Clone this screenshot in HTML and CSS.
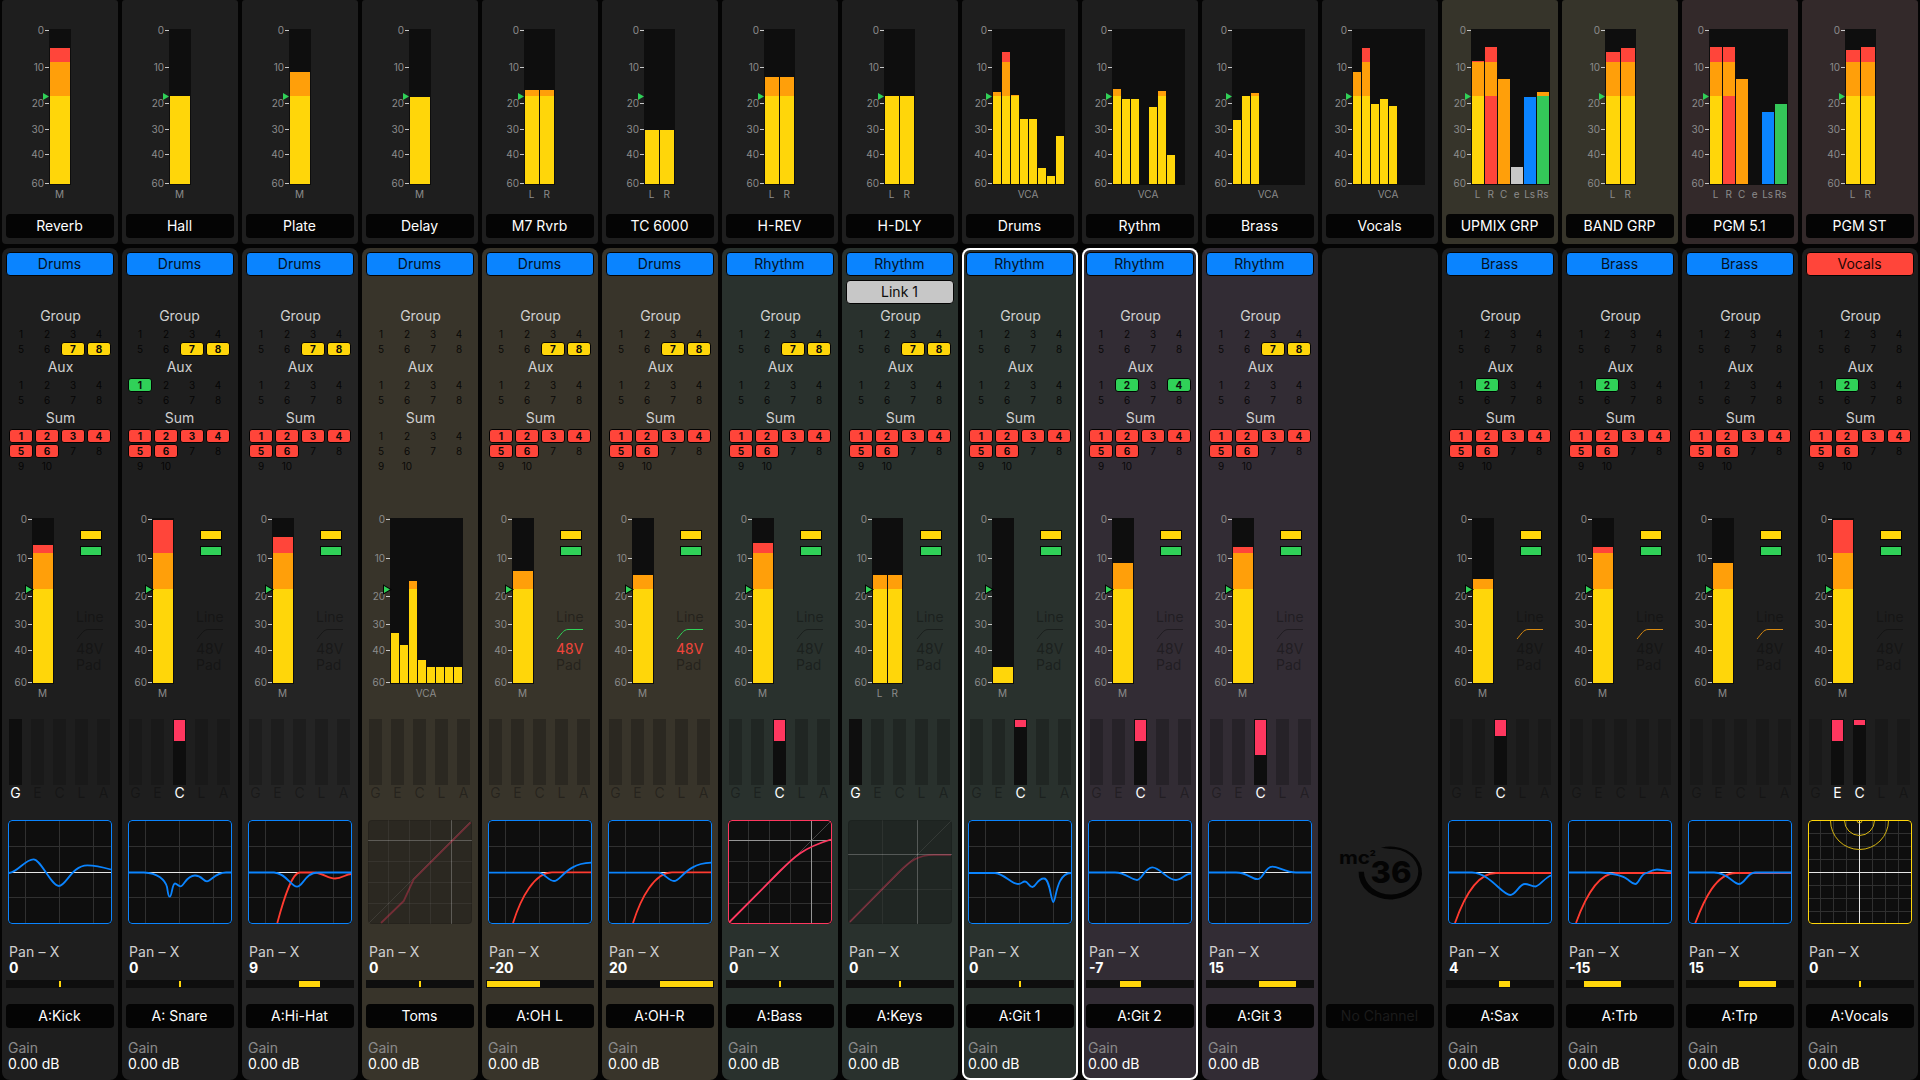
FILE: index.html
```html
<!DOCTYPE html>
<html lang="en">
<head>
<meta charset="utf-8">
<title>Mixer</title>
<link rel="stylesheet" href="styles.css">
</head>
<body>
<main class="console">
  <section class="row row-top" id="top"></section>
  <section class="row row-bottom" id="bottom"></section>
</main>
<script src="mixer.js"></script>
</body>
</html>
```
FILE: styles.css
```css
* { box-sizing: border-box; }
body {
  margin: 0;
  background: #040404;
  color: #fff;
  font: 14px/16px Inter, "Liberation Sans", sans-serif;
  width: 1920px;
  height: 1080px;
  overflow: hidden;
}
.console { display: flex; flex-direction: column; gap: 4px; padding: 0 2px; }
.row { display: grid; grid-template-columns: repeat(16, 116px); gap: 4px; }
.row-top { height: 244px; }
.row-bottom { height: 832px; }
svg { display: block; overflow: visible; }

.strip { display: flex; flex-direction: column; background: #1e1e1e; }
.row-top .strip { border-radius: 3px 3px 4px 4px; }
.row-bottom .strip { border-radius: 8px; padding-top: 4px; }
.light { background: #242424; }
.brown { background: #38342a; }
.green { background: #29312d; }
.purple { background: #322c34; }
.olive { background: #36342a; }
.maroon { background: #33292a; }
.selected { box-shadow: inset 0 0 0 2px #fff; }

/* level meters */
.scale { fill: #8c8c8c; font-size: 10px; text-anchor: end; }
.foot { fill: #8c8c8c; font-size: 10px; text-anchor: middle; }
.tick { fill: #c8c8c8; }
.well { fill: #0e0e0e; }
.meter rect { shape-rendering: crispEdges; }
.yellow { fill: #ffd60a; }
.orange { fill: #ff9f0a; }
.red { fill: #ff453a; }
.blue { fill: #0a84ff; }
.lime { fill: #34c759; }
.grey { fill: #c7c7c7; }
.mark { fill: #30d158; }
.mark-outlined { stroke: #040404; stroke-width: 2; paint-order: stroke; }

.name, .tag {
  height: 24px;
  margin: 0 4px;
  padding-right: 1px;
  border-radius: 4px;
  line-height: 23px;
  text-align: center;
  background: #040404;
  white-space: nowrap;
}
.row-top .name { margin-top: 8px; }
.tag { line-height: 21px; border: 1px solid #040404; color: #04101e; }
.tag-blue { background: #0a84ff; }
.tag-red { background: #ff453a; color: #1d0504; }
.tag-link { background: #c7c7c7; color: #0c0c0c; }
.name-off { color: #1b1b1b; }
.link-slot { height: 24px; margin-top: 4px; }

/* bus routing */
.routing { margin: 2px 5px 0 7px; height: 168px; }
.routing-shift { margin-left: 6px; }
.routing h3 {
  margin: 0;
  width: 103px;
  height: 21px;
  font-size: 14px;
  font-weight: 400;
  line-height: 20px;
  text-align: center;
  color: #d0d0d0;
}
.buses { display: grid; grid-template-columns: repeat(4, 24px); grid-auto-rows: 14px; gap: 1px 2px; margin-bottom: 1px; }
.bus {
  border: 1px solid transparent;
  border-radius: 3px;
  font-size: 10px;
  line-height: 13px;
  text-align: center;
  color: rgba(0, 0, 0, .85);
}
.bus-on { border-color: #040404; font-weight: 700; color: #0a0a0a; }
.bus-group { background: #ffd60a; }
.bus-aux { background: #30d158; }
.bus-sum { background: #ff453a; }

/* channel meter with input status */
.input { display: grid; grid-template-columns: 74px 1fr; height: 192px; margin-top: 36px; }
.status { padding-top: 20px; }
.led { width: 22px; height: 10px; margin: 0 0 6px 4px; border: 1px solid #040404; }
.led-yellow { background: #ffd60a; }
.led-green { background: #30d158; margin-bottom: 0; }
.flags { margin-top: 53px; color: rgba(8, 8, 8, .42); }
.flags div { height: 16px; line-height: 15px; }
.flags svg { margin: 3px 0 0 1px; fill: none; stroke: currentColor; stroke-width: 1; }
.flags .hpf { padding-top: 1px; }
.flags .phantom { color: #f0443a; }
.flags .hpf-green { color: #30d158; }
.flags .hpf-orange { color: #d98a10; }

/* dynamics */
.dynamics { display: grid; grid-template-columns: repeat(5, 13px); gap: 9px; margin: 17px 0 0 7px; height: 82px; }
.dynamics-shift { margin-left: 8px; }
.dyn { display: flex; flex-direction: column; align-items: center; color: rgba(8, 8, 8, .38); line-height: 15px; }
.dyn-bar { width: 13px; height: 66px; flex: none; padding: 1px; background: rgba(14, 14, 14, .32); }
.dyn-on { color: #fff; }
.dyn-on .dyn-bar { background: #0e0e0e; }
.dyn-fill { background: #ff375f; }

/* graphs */
.graph {
  width: 104px;
  height: 104px;
  margin: 19px 0 0 6px;
  overflow: hidden;
  border-radius: 4px;
  background: #0e0e0e;
}
.graph-off { background: rgba(14, 14, 14, .32); }
.frame { fill: none; stroke-width: 1; }
.grid { stroke: #303030; shape-rendering: crispEdges; }
.axis { stroke: #e6e6e6; shape-rendering: crispEdges; }
.axis-soft { stroke: #959595; shape-rendering: crispEdges; }
.diagonal { stroke: #454545; }
.curve { fill: none; stroke-width: 1.8; stroke-linejoin: round; }
.ring { fill: none; stroke: #d6b512; stroke-width: 1; }
.s-blue { stroke: #0a84ff; }
.s-red { stroke: #ff3b30; }
.s-pink { stroke: #ff375f; }
.s-yellow { stroke: #ffd60a; }
.s-dark { stroke: rgba(0, 0, 0, .1); }
.graph-off .grid { stroke: rgba(255, 255, 255, .06); }
.graph-off .axis-soft { stroke: rgba(255, 255, 255, .24); }
.graph-off .diagonal { stroke: rgba(255, 255, 255, .09); }
.graph-off .s-pink { stroke: rgba(255, 55, 95, .34); }

.pan { margin-top: 20px; padding-left: 7px; line-height: 15px; }
.pan div { height: 16px; }
.pan-label { color: #cfcfcf; letter-spacing: .15px; }
.pan-value { font-weight: 700; }
.pan-bar { margin: 4px 4px 16px; padding: 1px 0; height: 8px; background: #0e0e0e; }
.pan-fill { height: 6px; background: #ffd60a; }
.gain { margin-top: 12px; padding-left: 6px; line-height: 15px; }
.gain div { height: 16px; }
.gain-label { color: #8a8a8a; }

.logo { margin: 593px 0 103px 16px; fill: #040404; }
.logo text { font-weight: 700; }
.logo .logo-number { font-size: 30px; font-weight: 800; }
.logo-mc { font-size: 18px; }
.logo-sup { font-size: 14px; }
```
FILE: mixer.js
```js
const rect = (cls, x, y, w, h) => `<rect class="${cls}" x="${x}" y="${y}" width="${w}" height="${h}"/>`;

const TOP = { top: 29, bottom: 185, hot: 62, warm: 96, ticks: [30, 67, 103, 129, 154, 183], foot: 198, height: 206, outlined: '' };
const CHANNEL = { top: 8, bottom: 174, hot: 43, warm: 79, ticks: [9, 48, 86, 114, 140, 172], foot: 187, height: 192, outlined: ' mark-outlined' };

// x: left edge of the meter well, levels: top edge of each bar (null = silent)
function meter(s, width, x, barWidth, levels, feet, bases = []) {
  const total = levels.length * (barWidth + 1) + 1;
  let out = rect('well', x, s.top, total, s.bottom - s.top);
  [0, 10, 20, 30, 40, 60].forEach((v, i) => {
    out += `<text class="scale" x="${x - 4.9}" y="${s.ticks[i] + 4}">${v}</text>` + rect('tick', x - 4, s.ticks[i], 4, 1);
  });
  levels.forEach((top, i) => {
    if (top === null) return;
    const bx = x + 1 + i * (barWidth + 1);
    const base = bases[i] || 'yellow';
    const end = s.bottom - 1;
    if (top < s.hot) out += rect('red', bx, top, barWidth, s.hot - top);
    if (top < s.warm) out += rect('orange', bx, Math.max(top, s.hot), barWidth, s.warm - Math.max(top, s.hot));
    const from = Math.max(top, s.warm);
    out += rect(base, bx, from, barWidth, end - from);
  });
  const m = s.warm + 0.5;
  out += `<path class="mark${s.outlined}" d="M${x - 6} ${m - 3.5}L${x} ${m}L${x - 6} ${m + 3.5}Z"/>`;
  feet.forEach((t, i) => {
    const fx = feet.length === 1 ? x + total / 2 - 0.4 : x + 0.7 + barWidth / 2 + i * (barWidth + 1);
    out += `<text class="foot" x="${fx}" y="${s.foot}">${t}</text>`;
  });
  return `<svg class="meter" width="${width}" height="${s.height}">${out}</svg>`;
}

const M = ['M'], LR = ['L', 'R'], VCA = ['VCA'], SURROUND = ['L', 'R', 'C', 'e', 'Ls', 'Rs'];
const BASES = ['yellow', 'red', 'orange', 'grey', 'blue', 'lime'];
const n = null;
const topStrips = [
  ['Reverb', '', 47, 20, [48], M],
  ['Hall', '', 47, 20, [96], M],
  ['Plate', '', 47, 20, [72], M],
  ['Delay', '', 47, 20, [97], M],
  ['M7 Rvrb', '', 42, 14, [90, 90], LR],
  ['TC 6000', '', 42, 14, [130, 130], LR],
  ['H-REV', '', 42, 14, [77, 77], LR],
  ['H-DLY', '', 42, 14, [96, 96], LR],
  ['Drums', '', 30, 8, [92, 52, 95, 119, 119, 168, 176, 136], VCA],
  ['Rythm', '', 30, 8, [89, 99, 99, n, 107, 91, 155, n], VCA],
  ['Brass', '', 30, 8, [120, 96, 93, n, n, n, n, n], VCA],
  ['Vocals', '', 30, 8, [72, 48, 104, 99, 106, n, n, n], VCA],
  ['UPMIX GRP', 'olive', 29, 12, [61, 47, 79, 167, 97, 92], SURROUND, BASES],
  ['BAND GRP', 'olive', 43, 14, [52, 48], LR],
  ['PGM 5.1', 'maroon', 27, 12, [47, 47, 79, n, 112, 104], SURROUND, BASES],
  ['PGM ST', 'maroon', 43, 14, [50, 47], LR],
];

document.getElementById('top').innerHTML = topStrips.map(([name, tone, x, bw, lv, feet, bases]) =>
  `<article class="strip ${tone}">${meter(TOP, 116, x, bw, lv, feet, bases)}
  <div class="name">${name}</div></article>`).join('');

const vline = (c, x) => `<path class="${c}" d="M${x + 0.5} 0V104"/>`;
const hline = (c, y) => `<path class="${c}" d="M0 ${y + 0.5}H104"/>`;
const curve = (c, d) => `<path class="curve ${c}" d="${d}"/>`;
const frame = c => `<rect class="frame ${c}" x=".5" y=".5" width="103" height="103" rx="3.5"/>`;
const graph = (inner, c, off) =>
  `<div class="graph${off ? ' graph-off' : ''}"><svg width="104" height="104">${inner}${frame(c)}</svg></div>`;

const eq = (blue, red) => graph(
  [17, 51, 85].map(x => vline('grid', x)).join('') + [26, 77].map(y => hline('grid', y)).join('') +
  hline('axis', 52) + (red ? curve('s-red', red) : '') + curve('s-blue', blue), 's-blue');

const dynGraph = (lines, vx, hy, d, off) => graph(
  lines.map(([x, y]) => vline('grid', x) + hline('grid', y)).join('') +
  '<path class="diagonal" d="M1 103L103 1"/>' + vline('axis-soft', vx) + hline('axis-soft', hy) +
  curve('s-pink', d), off ? 's-dark' : 's-pink', off);

const surround = () => graph(
  [12, 25, 38, 64, 77, 90].map(x => vline('grid', x)).join('') +
  [13, 26, 39, 65, 78, 91].map(y => hline('grid', y)).join('') +
  vline('axis', 51) + hline('axis', 52) +
  [2.5, 15, 29].map(r => `<circle class="ring" cx="51.5" cy=".5" r="${r}"/>`).join(''), 's-yellow');

const overhead = () => eq('M1 52.7H50C57 53 60 61 66 61C73 61 78 43.5 103 42.7', 'M25 103C33 77 47 52.3 64 52.3H103');
const S6 = [1, 2, 3, 4, 5, 6];

const channels = [
  { tag: 'Drums', group: [7, 8], sum: S6, lv: [35], dyn: { G: 0 }, pan: 0, name: 'A:Kick',
    graph: eq('M1 53C10 52 17 39.3 25.5 39.3C33 39.3 43 66 51 66C58 66 64 45.3 79.3 45.3C88 45.3 96 47.5 103 49.5') },
  { tag: 'Drums', group: [7, 8], aux: [1], sum: S6, lv: [10], dyn: { C: 21 }, pan: 0, name: 'A: Snare', shift: true,
    graph: eq('M1 52.5H16C30 53 37 60 39 67C40 72 40 76.7 41.7 76.7C44 76.7 44 63.5 47 63.5C49 63.5 50 66.3 52.5 66.3C56 66.3 58 55.5 67 55.5C74 55.5 75 61.3 79 61.3C83 61.3 87 52.5 98 52.5H103') },
  { tag: 'Drums', tone: 'light', group: [7, 8], sum: S6, lv: [27], dyn: {}, pan: 9, fill: [53, 21], name: 'A:Hi-Hat',
    graph: eq('M1 52.5H26C38 53 43 66.7 49 66.7C55 66.7 57 52.5 70 52.5H103', 'M29.3 103C36 78 44 52.5 52 52.5H66C75 53 80 58.5 87 58.5C94 58.5 98 54 103 54') },
  { tag: 'Drums', tone: 'brown', vca: [123, 135, 71, 150, 157, 157, 157, 157], dyn: {}, pan: 0, name: 'Toms',
    graph: dynGraph([[20, 41], [41, 62], [62, 83]], 83, 20, 'M13 103L35.7 81L45.7 59.3L102.7 2.3', true) },
  { tag: 'Drums', tone: 'brown', group: [7, 8], sum: S6, lv: [61], hpf: 'hpf-green', phantom: true, dyn: {}, pan: -20, fill: [1, 53], name: 'A:OH L', graph: overhead() },
  { tag: 'Drums', tone: 'brown', group: [7, 8], sum: S6, lv: [65], hpf: 'hpf-green', phantom: true, dyn: {}, pan: 20, fill: [54, 53], name: 'A:OH-R', graph: overhead() },
  { tag: 'Rhythm', tone: 'green', group: [7, 8], sum: S6, lv: [33], dyn: { C: 21 }, pan: 0, name: 'A:Bass',
    graph: dynGraph([[20, 41], [41, 62], [62, 83]], 83, 20, 'M1 102.5L52 51C66 37 75 28 103 19.5') },
  { tag: 'Rhythm', tone: 'green', link: 'Link 1', group: [7, 8], sum: S6, lv: [65, 65], dyn: { G: 0 }, pan: 0, name: 'A:Keys',
    graph: dynGraph([[34, 69]], 69, 34, 'M1.7 102L50 53C62 41 70 34.8 86 34.8H103', true) },
  { tag: 'Rhythm', tone: 'green selected', sum: S6, lv: [157], dyn: { C: 7 }, dynShift: true, pan: 0, name: 'A:Git 1',
    graph: eq('M1 53H27C37 54 43 64 50 64C54 64 54 61.5 57 61.5C60 61.5 61 67 64.5 67C68 67 69 58.5 76 58.5C82 58.5 83 82 85.3 82C88 82 88 53 103 53') },
  { tag: 'Rhythm', tone: 'purple selected', aux: [2, 4], sum: S6, lv: [53], dyn: { C: 21 }, dynShift: true, pan: -7, fill: [34, 21], name: 'A:Git 2',
    graph: eq('M1 52.5H27C38 52.5 43 60 49 60C54 60 57 47.4 64.3 47.4C72 47.4 79 60 88 60C94 60 97 53.7 103 53.7') },
  { tag: 'Rhythm', tone: 'purple', group: [7, 8], sum: S6, lv: [37], dyn: { C: 35 }, dynShift: true, pan: 15, fill: [53, 37], name: 'A:Git 3',
    graph: eq('M1 52.5H28C40 52.5 43 59.2 49.5 59.2C55 59.2 57 46.6 64.5 46.6C70 46.6 78 52.5 88 52.5H103') },
  null,
  { tag: 'Brass', aux: [2], sum: S6, lv: [69], hpf: 'hpf-orange', dyn: { C: 16 }, dynShift: true, pan: 4, fill: [53, 11], name: 'A:Sax',
    graph: eq('M1 52.5H24C42 53 54 75 62.3 75C68 75 71 64 77 64C81 64 83 66.5 87.5 66.5C91 66.5 97 57.5 103 55.5', 'M7 103C15 80 28 53 48 53H103') },
  { tag: 'Brass', aux: [2], sum: S6, lv: [37], hpf: 'hpf-orange', dyn: {}, dynShift: true, pan: -15, fill: [18, 37], name: 'A:Trb',
    graph: eq('M1 52.5H32C44 53 56 56 59 59C62 61 64 64 67.3 64C71 64 72 54.5 78 53.2C82 51.5 85 49.5 89 49.5C93 49.5 97 51 103 51.2', 'M8 103C17 78 30 53 48 53H103') },
  { tag: 'Brass', sum: S6, lv: [53], hpf: 'hpf-orange', dyn: {}, dynShift: true, pan: 15, fill: [53, 37], name: 'A:Trp',
    graph: eq('M1 52.5H26C40 52.5 45 64 51 64C57 64 59 52.5 67 52.5H103', 'M7.3 103C16 80 28 53 48 53H103') },
  { tag: 'Vocals', tagTone: 'tag-red', aux: [2], sum: S6, lv: [10], dyn: { E: 21, C: 5 }, pan: 0, name: 'A:Vocals', graph: surround() },
];

const buses = (title, kind, count, on = []) => {
  let cells = '';
  for (let i = 1; i <= count; i++) cells += `<span class="bus${on.includes(i) ? ` bus-on bus-${kind}` : ''}">${i}</span>`;
  return `<h3>${title}</h3><div class="buses">${cells}</div>`;
};

const status = c => `<div class="status"><div class="led led-yellow"></div><div class="led led-green"></div>
  <div class="flags"><div>Line</div>
  <div class="hpf ${c.hpf || ''}"><svg width="26" height="11"><path d="M0 10C4 5.5 6.500 .5 11 .5H26"/></svg></div>
  <div class="${c.phantom ? 'phantom' : ''}">48V</div><div>Pad</div></div></div>`;

const dynamics = c => `<div class="dynamics${c.dynShift ? ' dynamics-shift' : ''}">` + [...'GECLA'].map(k =>
  `<div class="dyn${k in c.dyn ? ' dyn-on' : ''}"><div class="dyn-bar">${c.dyn[k] ? `<div class="dyn-fill" style="height:${c.dyn[k]}px"></div>` : ''}</div>${k}</div>`).join('') + '</div>';

const channel = c => {
  const [left, width] = c.fill || [53, 2];
  const view = c.vca ? meter(CHANNEL, 74, 28, 8, c.vca, VCA)
    : c.lv.length === 2 ? meter(CHANNEL, 74, 30, 14, c.lv, LR)
    : meter(CHANNEL, 74, 30, 20, c.lv, M);
  return `<article class="strip ${c.tone || ''}">
  <div class="tag ${c.tagTone || 'tag-blue'}">${c.tag}</div>
  <div class="link-slot">${c.link ? `<div class="tag tag-link">${c.link}</div>` : ''}</div>
  <div class="routing${c.shift ? ' routing-shift' : ''}">${buses('Group', 'group', 8, c.group)}${buses('Aux', 'aux', 8, c.aux)}${buses('Sum', 'sum', 10, c.sum)}</div>
  <div class="input">${view}${c.vca ? '' : status(c)}</div>
  ${dynamics(c)}
  ${c.graph}
  <div class="pan"><div class="pan-label">Pan – X</div><div class="pan-value">${c.pan}</div></div>
  <div class="pan-bar"><div class="pan-fill" style="margin-left:${left}px;width:${width}px"></div></div>
  <div class="name">${c.name}</div>
  <div class="gain"><div class="gain-label">Gain</div><div>0.00 dB</div></div>
  </article>`;
};

const emptyStrip = `<article class="strip">
  <svg class="logo" width="86" height="56">
    <path d="M20.630 26.800A31.700 26.500 0 1 0 43 2.660L52 3.920A27.200 22.800 0 1 1 25.900 26.800Z"/>
    <text class="logo-number" x="32.500" y="37.800" textLength="41" lengthAdjust="spacingAndGlyphs">36</text>
    <text class="logo-mc" x="1" y="19.300" textLength="31" lengthAdjust="spacingAndGlyphs">mc</text>
    <text class="logo-sup" x="31.500" y="17" textLength="6.500" lengthAdjust="spacingAndGlyphs">²</text>
  </svg>
  <div class="name name-off">No Channel</div></article>`;

document.getElementById('bottom').innerHTML = channels.map(c => c ? channel(c) : emptyStrip).join('');
```
